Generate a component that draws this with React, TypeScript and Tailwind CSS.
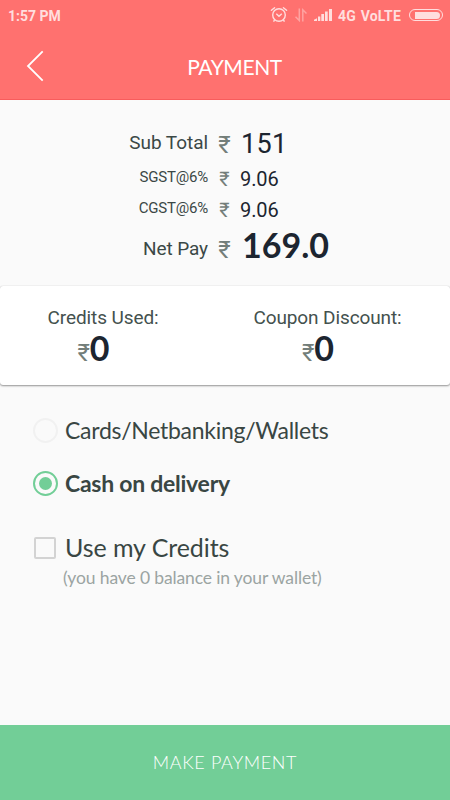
const StatusBar = () => (
  <div className="flex h-[31px] items-center pl-2 pr-[7px] font-['Roboto',sans-serif] text-sm font-bold text-[#ffdede]">
    <span>1:57 PM</span>
    <div className="ml-auto flex items-center pb-px">
      <svg className="h-[18px] w-[18px]" viewBox="0 0 18 18" fill="none" stroke="currentColor" strokeWidth="1.4">
        <circle cx="9" cy="9" r="6.3" />
        <path d="M6.3 7.8 9 10.3l2.8-2.5" />
        <path d="M1.4 4.3 4.6 1.7M16.6 4.3 13.4 1.7" strokeLinecap="round" />
        <path d="M4.6 14 3.5 15.7M13.4 14l1.1 1.7" />
      </svg>
      <svg className="ml-[7px] h-[14px] w-[12px] text-[#ffa3a1]" viewBox="0 0 12 14" fill="none" stroke="currentColor" strokeWidth="1.5">
        <path d="M4.3 0.5V12.5L0.5 8.8" />
        <path d="M7.8 13.5V1.8L11.5 5.5" />
      </svg>
      <svg className="ml-[7px] h-[14px] w-[19px]" viewBox="0 0 19 14" fill="currentColor">
        <path d="M0 13v-1.2l3-1.6V13z" />
        <rect x="4" y="8.5" width="2.3" height="4.5" />
        <rect x="7.3" y="6" width="2.7" height="7" />
        <rect x="11" y="3.5" width="2.7" height="9.5" />
        <rect x="15" y="1" width="3" height="12" />
      </svg>
      <span className="ml-[5px] pt-px">4G</span>
      <span className="ml-[5px] pt-px tracking-[0.2px]">VoLTE</span>
      <div className="ml-[8px] flex h-3 w-[34px] items-center rounded-full border-[1.5px] border-[#ffdede] pl-[5px] pr-[2px]">
        <div className="h-[7px] w-full rounded-r-full bg-[#ffdede]" />
      </div>
    </div>
  </div>
);

type AmountRowProps = {
  label: string;
  value: string;
  className: string;
  labelClass: string;
  rupeeClass: string;
  valueClass: string;
};

const amounts: AmountRowProps[] = [
  {
    label: "Sub Total",
    value: "151",
    className: "h-[31px]",
    labelClass: "pb-[6px] text-[19px] tracking-[-0.05px]",
    rupeeClass: "pb-px text-[24px]",
    valueClass: "ml-[9px] text-[27px] tracking-[0.3px]",
  },
  {
    label: "SGST@6%",
    value: "9.06",
    className: "h-[31px]",
    labelClass: "pb-1 text-[15px] tracking-[-0.2px]",
    rupeeClass: "text-[20px]",
    valueClass: "ml-[8px] text-[20px] tracking-[-0.1px]",
  },
  {
    label: "CGST@6%",
    value: "9.06",
    className: "h-[31px]",
    labelClass: "pb-1 text-[15px] tracking-[-0.2px]",
    rupeeClass: "text-[20px]",
    valueClass: "ml-[8px] text-[20px] tracking-[-0.1px]",
  },
  {
    label: "Net Pay",
    value: "169.0",
    className: "h-[43px]",
    labelClass: "pb-[5px] text-[19px] tracking-[-0.1px]",
    rupeeClass: "pb-px text-[24px]",
    valueClass: "ml-[10px] pb-px font-['Lato',sans-serif] text-[34px] font-bold",
  },
];

const AmountRow = ({ label, value, className, labelClass, rupeeClass, valueClass }: AmountRowProps) => (
  <div className={`flex items-end leading-none ${className}`}>
    <span className={`w-[208px] text-right text-[#3b4846] ${labelClass}`}>{label}</span>
    <span className={`ml-[9px] flex w-[15px] justify-center text-[#737e7a] ${rupeeClass}`}>₹</span>
    <span className={`text-[#1c2530] ${valueClass}`}>{value}</span>
  </div>
);

const Credit = ({ label }: { label: string }) => (
  <div className="flex flex-col items-center whitespace-nowrap">
    <span className="text-[19px] leading-6 tracking-[-0.1px] text-[#44514e]">{label}</span>
    <div className="-mt-1 flex items-baseline pr-[19px]">
      <span className="text-[24px] leading-none text-[#737e7a]">₹</span>
      <span className="font-['Lato',sans-serif] text-[34px] leading-[44px] font-bold text-[#1c2530]">0</span>
    </div>
  </div>
);

export default function App() {
  return (
    <div className="flex h-[800px] w-[450px] flex-col overflow-hidden bg-[#fafafa] font-['Roboto',sans-serif]">
      {/* header */}
      <header className="h-[100px] border-b border-[#f85c5c] bg-[#ff716f]">
        <StatusBar />
        <div className="grid h-[69px] grid-cols-[1fr_auto_1fr] items-center">
          <svg className="ml-[26px] h-[32px] w-[18px]" viewBox="0 0 18 32" fill="none" stroke="#fff" strokeWidth="1.8">
            <path d="M16.7 1.3 2 16l14.7 14.7" />
          </svg>
          <h1 className="ml-[19px] pt-[3px] font-['Lato',sans-serif] text-[21px] tracking-[-0.4px] text-white">PAYMENT</h1>
        </div>
      </header>

      {/* amounts */}
      <section className="flex h-[186px] flex-col pt-[27px]">
        {amounts.map((row) => (
          <AmountRow key={row.label} {...row} />
        ))}
      </section>

      {/* credits & coupon */}
      <section className="flex h-[99px] rounded-[3px] bg-white pt-5 shadow-[0_1px_2px_rgba(0,0,0,0.4),0_0_1px_rgba(0,0,0,0.2)]">
        <div className="ml-[47px] w-[112px]">
          <Credit label="Credits Used:" />
        </div>
        <div className="ml-[93px] w-[151px]">
          <Credit label="Coupon Discount:" />
        </div>
      </section>

      {/* payment methods */}
      <section className="flex-1 pl-[33px] pt-[30px] font-['Lato',sans-serif] text-[#394643]">
        <div className="flex h-[30px] items-center">
          <div className="h-[25px] w-[25px] rounded-full border-2 border-[#f1f1f1]" />
          <span className="ml-[7px] text-[23px] tracking-[-0.28px]">Cards/Netbanking/Wallets</span>
        </div>
        <div className="mt-[23px] flex h-[30px] items-center">
          <div className="flex h-[25px] w-[25px] items-center justify-center rounded-full border-2 border-[#72ce97]">
            <div className="h-[13px] w-[13px] rounded-full bg-[#72ce97]" />
          </div>
          <span className="ml-[7px] text-[23px] font-bold tracking-[-0.26px]">Cash on delivery</span>
        </div>
        <div className="mt-[35px] flex h-[30px] items-center">
          <div className="ml-px h-[22px] w-[22px] rounded-[2px] border-2 border-[#d3d3d3]" />
          <span className="ml-[9px] text-[25px] tracking-[-0.07px]">Use my Credits</span>
        </div>
        <p className="ml-[30px] mt-[3px] text-[17.5px] leading-6 tracking-[-0.13px] text-[#9ba4a2]">
          (you have 0 balance in your wallet)
        </p>
      </section>

      <button className="h-[75px] bg-[#72ce97] font-['Lato',sans-serif] text-[18px] font-light tracking-[0.65px] text-white">
        MAKE PAYMENT
      </button>
    </div>
  );
}
